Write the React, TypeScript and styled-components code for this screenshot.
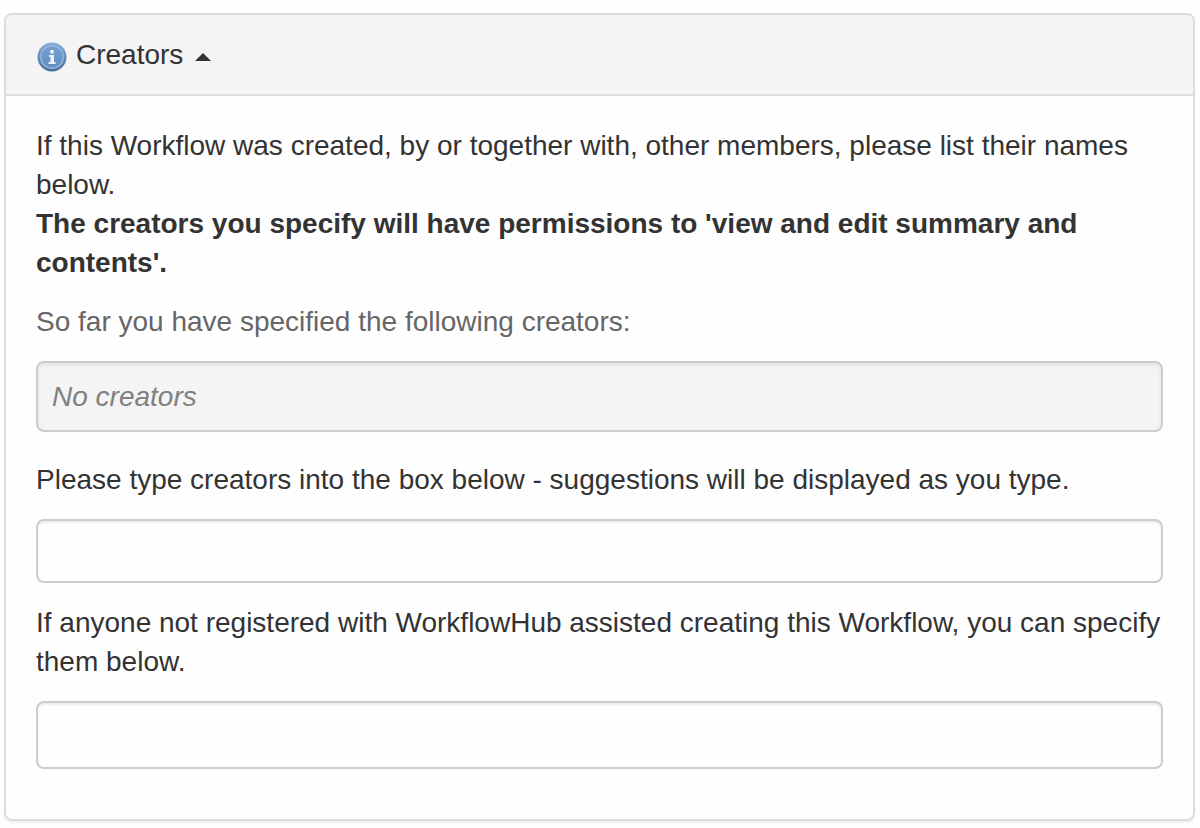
import React, { useState } from "react";
import styled, { createGlobalStyle } from "styled-components";

const GlobalStyle = createGlobalStyle`
  *, *::before, *::after { box-sizing: border-box; }
  body {
    margin: 0;
    background: #fefefe;
    color: #333;
    font-family: "Liberation Sans", Arial, Helvetica, sans-serif;
    font-size: 28px;
    line-height: 39px;
  }
`;

const Page = styled.main`
  padding: 13px 5px 7px 4px;
`;

const Panel = styled.section`
  background: #fefefe;
  border: 2px solid #ddd;
  border-radius: 8px;
  box-shadow: 0 2px 2px rgba(0, 0, 0, 0.05);
`;

const PanelHeading = styled.h2`
  margin: 0;
  padding: 20px 30px;
  border-bottom: 2px solid #ddd;
  border-radius: 6px 6px 0 0;
  background: #f4f4f4;
  font-size: inherit;
  font-weight: 400;
`;

const Toggle = styled.button`
  display: flex;
  align-items: center;
  width: 100%;
  padding: 0;
  border: 0;
  background: none;
  color: inherit;
  font: inherit;
  text-align: left;
  cursor: pointer;
`;

const InfoIcon = styled.svg`
  width: 32px;
  height: 32px;
  margin: 4px 8px 0 0;
`;

const Caret = styled.span<{ $open: boolean }>`
  margin: 4px 0 0 12px;
  border-left: 8px solid transparent;
  border-right: 8px solid transparent;
  ${(p) => (p.$open ? "border-bottom" : "border-top")}: 8px solid #333;
`;

const PanelBody = styled.div`
  display: flex;
  flex-direction: column;
  gap: 20px;
  padding: 30px 30px 50px;
`;

const Paragraph = styled.p<{ $muted?: boolean }>`
  margin: 0;
  color: ${(p) => (p.$muted ? "#666" : "#333")};
`;

const FieldLabel = styled.label`
  display: block;
`;

const CreatorList = styled.div`
  margin-bottom: 8px;
  padding: 14px;
  border: 2px solid #ccc;
  border-radius: 8px;
  background: #f4f4f4;
  box-shadow: inset 0 2px 4px rgba(0, 0, 0, 0.08);
  color: #808080;
  font-style: italic;
`;

const TextInput = styled.input<{ $tall?: boolean }>`
  display: block;
  width: 100%;
  height: ${(p) => (p.$tall ? 68 : 64)}px;
  padding: 12px 14px;
  border: 2px solid #ccc;
  border-radius: 8px;
  background: #fefefe;
  box-shadow: inset 0 2px 2px rgba(0, 0, 0, 0.08);
  color: #555;
  font: inherit;
  outline-color: #66afe9;
`;

function Info() {
  return (
    <InfoIcon viewBox="0 0 32 32" aria-hidden="true">
      <defs>
        <linearGradient id="info-rim" x1="0" y1="0" x2="0" y2="1">
          <stop offset="0" stopColor="#86acd6" />
          <stop offset="1" stopColor="#4a6d9f" />
        </linearGradient>
        <linearGradient id="info-face" x1="0" y1="0" x2="0" y2="1">
          <stop offset="0" stopColor="#74a1d0" />
          <stop offset="1" stopColor="#5f8dc2" />
        </linearGradient>
      </defs>
      <circle cx="16" cy="16" r="14.5" fill="url(#info-rim)" />
      <circle cx="16" cy="16" r="11.2" fill="url(#info-face)" stroke="#92b6dc" strokeWidth="1.4" />
      <circle cx="16" cy="10.7" r="2" fill="#eef4fa" />
      <path d="M13 14h5v7h1.5v2h-7v-2h2v-5H13z" fill="#eef4fa" />
    </InfoIcon>
  );
}

export default function App() {
  const [open, setOpen] = useState(true);
  return (
    <>
      <GlobalStyle />
      <Page>
        <Panel>
          <PanelHeading>
            <Toggle type="button" aria-expanded={open} onClick={() => setOpen(!open)}>
              <Info />
              Creators
              <Caret $open={open} />
            </Toggle>
          </PanelHeading>
          {open && (
            <PanelBody>
              <Paragraph>
                If this Workflow was created, by or together with, other members, please list their
                names below.
                <br />
                <strong>
                  The creators you specify will have permissions to 'view and edit summary and
                  contents'.
                </strong>
              </Paragraph>
              <Paragraph $muted>So far you have specified the following creators:</Paragraph>
              <CreatorList>No creators</CreatorList>
              <FieldLabel htmlFor="creator-search">
                Please type creators into the box below - suggestions will be displayed as you type.
              </FieldLabel>
              <TextInput id="creator-search" type="text" autoComplete="off" />
              <FieldLabel htmlFor="other-creators">
                If anyone not registered with WorkflowHub assisted creating this Workflow, you can
                specify them below.
              </FieldLabel>
              <TextInput id="other-creators" type="text" $tall />
            </PanelBody>
          )}
        </Panel>
      </Page>
    </>
  );
}
